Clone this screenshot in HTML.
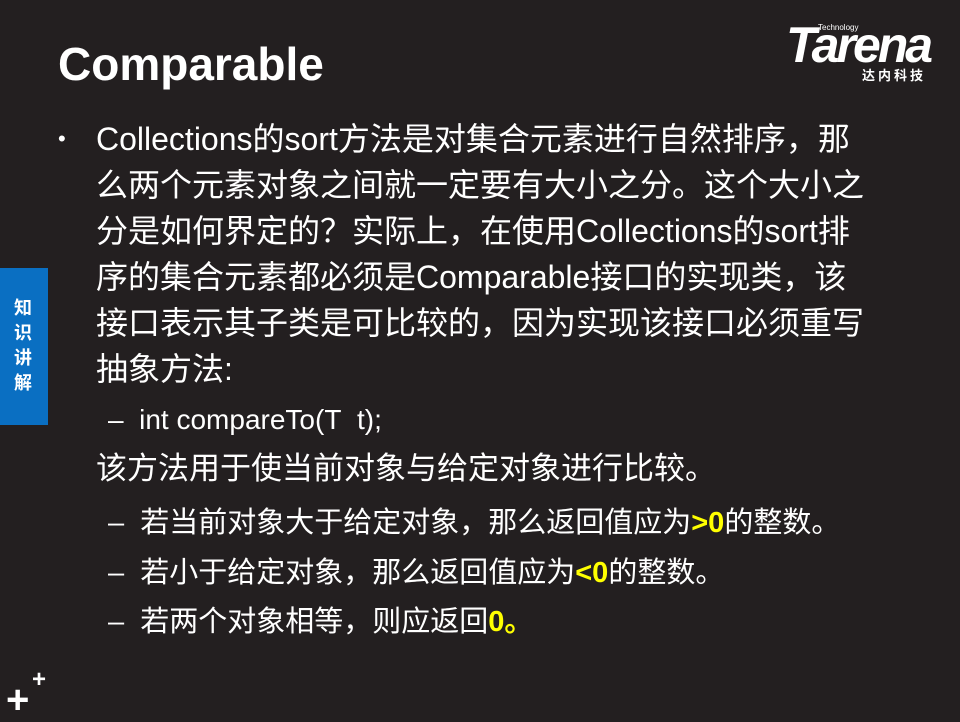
<!DOCTYPE html>
<html><head><meta charset="utf-8"><style>
body{margin:0;width:960px;height:720px;background:#231f20;position:relative;overflow:hidden;font-family:"Liberation Sans","Noto Sans CJK SC",sans-serif;color:#fff}
.a{position:absolute;white-space:nowrap}
.t{left:58px;top:37px;font-size:46px;font-weight:bold}
.b{left:96px;font-size:32px;line-height:46px;top:116px}
.s{font-size:29px;line-height:34px}
.y{color:#ffff00;font-weight:bold}
</style></head><body>
<div class="a t">Comparable</div>
<div class="a" style="left:786px;top:20px;font-size:50px;font-weight:bold;font-style:italic;letter-spacing:-3px;line-height:50px">Tarena</div>
<div class="a" style="left:818px;top:23px;font-size:8px">Technology</div>
<div class="a" style="left:862px;top:65px;font-size:13px;font-weight:bold;letter-spacing:3px">达内科技</div>
<div class="a" style="left:0;top:268px;width:48px;height:157px;background:#0a6fc2"></div>
<div class="a" style="left:14px;top:296px;font-size:18px;font-weight:bold;line-height:25px;width:20px;white-space:normal">知识讲解</div>
<div class="a" style="left:58px;top:126px;font-size:22px">•</div>
<div class="a b">Collections的sort方法是对集合元素进行自然排序，那<br>么两个元素对象之间就一定要有大小之分。这个大小之<br>分是如何界定的？实际上，在使用Collections的sort排<br>序的集合元素都必须是Comparable接口的实现类，该<br>接口表示其子类是可比较的，因为实现该接口必须重写<br>抽象方法:</div>
<div class="a" style="left:108px;top:403px;font-size:28px;line-height:34px">–&nbsp; int compareTo(T&nbsp; t);</div>
<div class="a" style="left:96px;top:450px;font-size:31px;line-height:37px">该方法用于使当前对象与给定对象进行比较。</div>
<div class="a s" style="left:108px;top:506px">–&nbsp; 若当前对象大于给定对象，那么返回值应为<span class="y">&gt;0</span>的整数。</div>
<div class="a s" style="left:108px;top:556px">–&nbsp; 若小于给定对象，那么返回值应为<span class="y">&lt;0</span>的整数。</div>
<div class="a s" style="left:108px;top:605px">–&nbsp; 若两个对象相等，则应返回<span class="y">0。</span></div>
<div class="a" style="left:6px;top:682px;font-size:40px;font-weight:bold;line-height:36px">+</div>
<div class="a" style="left:32px;top:668px;font-size:24px;font-weight:bold;line-height:24px">+</div>
</body></html>
